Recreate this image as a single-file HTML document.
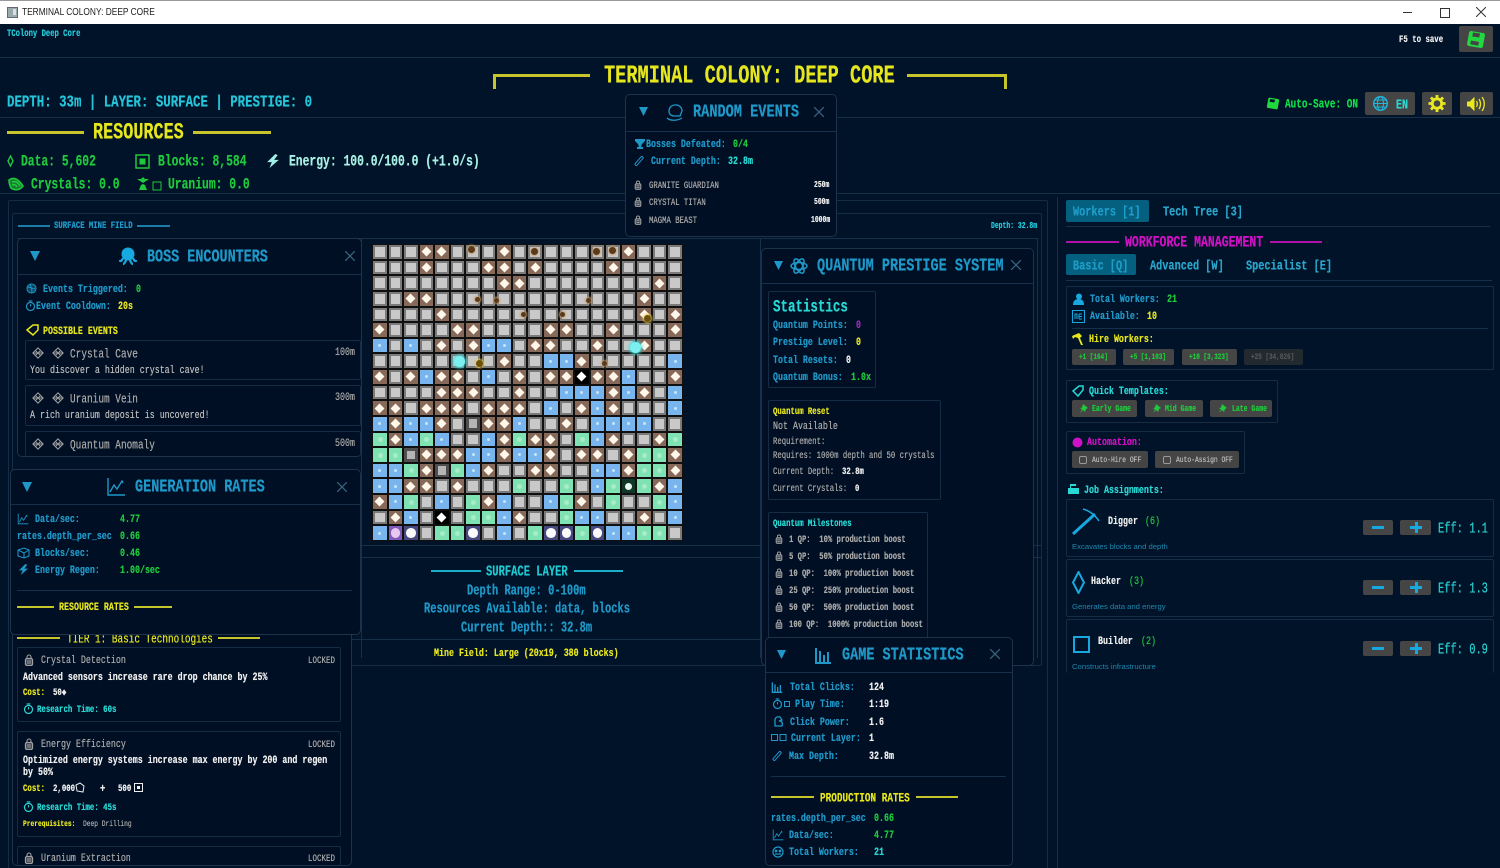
<!DOCTYPE html>
<html><head><meta charset="utf-8"><title>TERMINAL COLONY: DEEP CORE</title>
<style>
html,body{margin:0;padding:0;background:#011329}
#r{position:relative;width:1500px;height:868px;overflow:hidden;background:#011329;filter:blur(.35px)}
#r>*{position:absolute}
p{margin:1px 0 0;line-height:0;white-space:pre;transform:scale(.8,1.1);transform-origin:0 0;font:bold 10.4px/0 "Liberation Mono","DejaVu Sans Mono",monospace;color:#1f98c8;text-shadow:0 0 .4px currentColor}
.n{font-weight:normal}
.y{color:#e6e61e}.t{color:#28d8d4}.g{color:#1fc83c}.w{color:#eee}.a{color:#a8a8a8}.m{color:#d010c4}.c{color:#1f98c8}
.l{background:#17304a;height:1px}.v{background:#17304a;width:1px}
.bx{border:1px solid #142d44;box-sizing:border-box;border-radius:2px}
.yl{background:#c6c62c;height:2px}
.pop{background:#010f24;border:1px solid #1c3349;border-radius:5px;box-sizing:border-box}
.btn{background:#454545;border-radius:2px}
svg.i{fill:none;stroke:currentColor;overflow:visible}
svg.i.c{color:#1f98c8}svg.i.a{color:#a0a0a0}svg.i.t{color:#28d8d4}svg.i.g{color:#1fc83c}svg.i.y{color:#e6e61e}
#grid{left:372px;top:244px;width:311px;height:297px;display:grid;grid-template-columns:repeat(20,15.55px);grid-auto-rows:15.63px;background:#101010}
#grid i{position:relative;display:block}
#grid i::before,#grid i::after{content:"";position:absolute}
#grid i::before{inset:1px}
.G::before{background:#7a7a7a}.G::after{inset:3px;background:#c9c9c9}
.H::before{background:#4e4e4e}.H::after{inset:3.5px;background:#b5b5b5}
.D::before{background:#87695a}.D::after{left:4.3px;top:4.3px;width:7px;height:7px;background:#fff7ea;transform:rotate(45deg)}
.B::before{background:#78b4ee}.B::after{left:6.3px;top:6.3px;width:3px;height:3px;border-radius:50%;background:#c4e6fb}
.U::before{background:#7fe2b2}.U::after{left:5.5px;top:5.5px;width:5px;height:5px;border-radius:50%;background:#a8ecc8}
.K::before{background:#000}.K::after{left:4.3px;top:4.3px;width:7px;height:7px;background:#fff;transform:rotate(45deg)}
.Q::before{background:#464a80}.Q::after{left:3px;top:3px;width:9.6px;height:9.6px;border-radius:50%;background:#fafafa}
.P::before{background:#7f5ab8}.P::after{left:3px;top:3px;width:9.6px;height:9.6px;border-radius:50%;background:#e8c8f0}
.X::before{background:#103828}.X::after{left:4.5px;top:4.5px;width:7px;height:7px;border-radius:50%;background:#e8f8f0}
.o{width:7px;height:7px;border-radius:50%;background:#5a3a1c;box-shadow:0 0 2px 1px #c8a070}
.oy{width:7px;height:7px;border-radius:50%;background:#6a5010;box-shadow:0 0 2px 1px #e8c840}
.hx{width:11px;height:11px;border-radius:50%;background:#7cf0f0;box-shadow:0 0 3px 1px #40e0e0}
</style></head><body><div id="r">
<svg width="0" height="0" style="left:0;top:0"><defs>
<symbol id="lock" viewBox="0 0 10 12"><rect x="1.5" y="4.5" width="7" height="7" rx="1.5" fill="currentColor" fill-opacity=".35" stroke-width="1.3"/><path d="M3 4.5V3a2 2 0 0 1 4 0v1.5M3 7h4M3 9h4" stroke-width="1.1"/></symbol>
<symbol id="gem" viewBox="0 0 14 14"><path d="M7 1 13 7 7 13 1 7ZM4 4l6 6M10 4 4 10M1 7h12" stroke-width="1.2"/></symbol>
<symbol id="clock" viewBox="0 0 12 12"><circle cx="6" cy="7" r="4.4" stroke-width="1.3"/><path d="M4 1h4M6 7V4.5" stroke-width="1.2"/></symbol>
<symbol id="chart" viewBox="0 0 20 20"><path d="M2 1v17h17M4 15l4-7 3 4 5-8 1 2" stroke-width="1.4"/></symbol>
<symbol id="ruler" viewBox="0 0 12 14"><path d="M1 10 8 2c1-1 3 1 2 2L3 12c-1 1-3-1-2-2Z" stroke-width="1.2"/></symbol>
<symbol id="bars" viewBox="0 0 18 18"><path d="M2 17V2M6 17V5M10 17V9M14 17V6M1 17h16" stroke-width="2"/></symbol>
<symbol id="bolt" viewBox="0 0 12 12"><path d="M8 0 1 7h4L3 12l8-7H7L10 1Z" fill="currentColor" stroke="none"/></symbol>
</defs></svg>

<!-- title bar -->
<div style="left:0;top:0;width:1500px;height:24px;background:#fff;border-top:1px solid #999;box-sizing:border-box"></div>
<svg style="left:7px;top:7px" width="11" height="11"><rect x=".5" y=".5" width="10" height="10" fill="#9aa" stroke="#667"/><rect x="6" y="2" width="3" height="6" fill="#dde"/></svg>
<div style="left:22px;top:6px;font:10.2px/13px 'Liberation Sans',sans-serif;color:#222;white-space:pre;transform:scaleX(.82);transform-origin:0 0">TERMINAL COLONY: DEEP CORE</div>
<div style="left:1403px;top:12px;width:9px;height:1px;background:#333"></div>
<div style="left:1440px;top:8px;width:8px;height:8px;border:1px solid #333"></div>
<svg style="left:1476px;top:7px" width="10" height="10"><path d="M0 0 10 10M10 0 0 10" stroke="#333"/></svg>

<!-- frame lines -->
<div class="l" style="left:0;top:57px;width:1500px"></div>
<div class="l" style="left:0;top:117px;width:1500px"></div>
<div class="l" style="left:0;top:193px;width:1500px"></div>
<div class="bx" style="left:8px;top:200px;width:1040px;height:670px"></div>
<div class="bx" style="left:12px;top:213px;width:1030px;height:453px"></div>
<div class="l" style="left:17px;top:238px;width:1020px"></div>
<div class="l" style="left:352px;top:545px;width:690px"></div>
<div class="l" style="left:352px;top:557px;width:690px"></div>
<div class="l" style="left:352px;top:639px;width:410px"></div>
<div class="v" style="left:361px;top:238px;height:420px"></div>
<div class="v" style="left:760px;top:238px;height:420px"></div>
<div class="v" style="left:1037px;top:238px;height:420px"></div>
<div class="v" style="left:1057px;top:197px;height:671px"></div>

<!-- header -->
<p style="left:7px;top:33px;font-size:9px;color:#25c8d8">TColony Deep Core</p>
<p class="w" style="left:1399px;top:39px;font-size:9.2px">F5 to save</p>
<div class="btn" style="left:1459px;top:26px;width:34px;height:26px"></div>
<svg style="left:1466px;top:30px" width="20" height="19" viewBox="0 0 20 19"><path d="M5 1 17 3c1 0 2 1 2 2l-2 11c0 1-1 2-2 2L3 16c-1 0-2-1-2-2L3 3c0-1 1-2 2-2Z" fill="#22d840"/><path d="M7 2.500l7 1-.7 4-7-1ZM5 10.500l8 1.400-.7 3.800-8-1.400Z" fill="#444"/></svg>

<div class="yl" style="left:493px;top:74px;width:97px;height:3px"></div>
<div class="yl" style="left:493px;top:74px;width:3px;height:15px"></div>
<div class="yl" style="left:907px;top:74px;width:100px;height:3px"></div>
<div class="yl" style="left:1004px;top:74px;width:3px;height:15px"></div>
<p class="y" style="left:604px;top:75px;font-size:23.300px">TERMINAL COLONY: DEEP CORE</p>

<p style="left:7px;top:101px;font-size:15.500px;color:#25c4d8">DEPTH: 33m | LAYER: SURFACE | PRESTIGE: 0</p>

<svg style="left:1266px;top:97px" width="14" height="13" viewBox="0 0 20 19"><path d="M5 1 17 3c1 0 2 1 2 2l-2 11c0 1-1 2-2 2L3 16c-1 0-2-1-2-2L3 3c0-1 1-2 2-2Z" fill="#22d840"/><path d="M6 3l7 1-1 4-7-1Z" fill="#011329"/></svg>
<p style="left:1285px;top:103px;font-size:11.700px;color:#10dc48">Auto-Save: ON</p>
<div class="btn" style="left:1365px;top:92px;width:50px;height:23px"></div>
<svg style="left:1373px;top:96px" width="15" height="15" viewBox="0 0 15 15" fill="none" stroke="#20b8e0"><circle cx="7.500" cy="7.500" r="6.800" stroke-width="1.400"/><ellipse cx="7.500" cy="7.500" rx="3" ry="6.800"/><path d="M1 7.500h13M2 4h11M2 11h11"/></svg>
<p style="left:1396px;top:104px;font-size:12.500px;color:#28d8d4">EN</p>
<div class="btn" style="left:1422px;top:92px;width:30px;height:23px"></div>
<svg style="left:1428px;top:95px" width="18" height="17" viewBox="0 0 18 18"><circle cx="9" cy="9" r="5" fill="none" stroke="#e8e820" stroke-width="3"/><path d="M9 0v4M9 14v4M0 9h4M14 9h4M2.600 2.600 5 5M13 13l2.400 2.400M15.400 2.600 13 5M5 13l-2.400 2.400" stroke="#e8e820" stroke-width="3"/></svg>
<div class="btn" style="left:1460px;top:92px;width:33px;height:23px"></div>
<svg style="left:1467px;top:97px" width="19" height="14" viewBox="0 0 19 14" fill="none" stroke="#e8e820"><path d="M0 5h3l4-4v12L3 9H0Z" fill="#e8e820"/><path d="M9.500 4c1 2 1 4 0 6M12 2c2 3 2 7 0 10M15 0c3 4 3 10 0 14" stroke-width="1.300"/></svg>

<!-- resources -->
<div class="yl" style="left:7px;top:131px;width:77px;height:3px"></div>
<div class="yl" style="left:193px;top:131px;width:78px;height:3px"></div>
<p class="y" style="left:93px;top:133px;font-size:21px">RESOURCES</p>
<svg style="left:7px;top:155px" width="7" height="12"><path d="M3.500 1 6 6 3.500 11 1 6Z" fill="none" stroke="#1fc83c" stroke-width="1.400"/></svg>
<p class="g" style="left:21px;top:161px;font-size:14.200px">Data: 5,602</p>
<svg style="left:135px;top:154px" width="15" height="15"><rect x="1" y="1" width="13" height="13" fill="none" stroke="#1fc83c" stroke-width="1.500"/><rect x="4.500" y="4.500" width="6" height="6" fill="#1fc83c"/></svg>
<p class="g" style="left:158px;top:161px;font-size:14.200px">Blocks: 8,584</p>
<svg class="i" style="left:266px;top:154px;color:#a0f0e8" width="14" height="14" viewBox="0 0 12 12"><use href="#bolt"/></svg>
<p style="left:289px;top:161px;font-size:14.200px;color:#a8f0e4">Energy: 100.0/100.0 (+1.0/s)</p>
<svg style="left:8px;top:177px" width="16" height="14" viewBox="0 0 16 14" fill="none" stroke="#1fc83c" stroke-width="1.600"><path d="M1 3c4-3 9-2 14 6-3 4-8 5-12 2C2 9 1 6 1 3Z" fill="#1a7a30"/><path d="M4 5c3-1 6 0 8 4M4 8c2-1 4 0 5 2"/></svg>
<p class="g" style="left:31px;top:184px;font-size:14.200px">Crystals: 0.0</p>
<svg style="left:136px;top:177px" width="26" height="14" viewBox="0 0 26 14"><path d="M7 6 1 2h4L7 0l2 2h4ZM5 8l2-1 2 1 2 5H3Z" fill="#1fc83c"/><rect x="17" y="5" width="8" height="8" fill="none" stroke="#1fc83c"/></svg>
<p class="g" style="left:168px;top:184px;font-size:14.200px">Uranium: 0.0</p>

<!-- mine header -->
<div class="l" style="left:18px;top:225px;width:32px;height:2px;background:#1c7ea8"></div>
<div class="l" style="left:137px;top:225px;width:33px;height:2px;background:#1c7ea8"></div>
<p style="left:54px;top:225px;font-size:9.100px">SURFACE MINE FIELD</p>
<p style="left:991px;top:226px;font-size:8px;color:#20c8d8">Depth: 32.8m</p>

<!-- grid -->
<div id="grid">
<i class=G></i><i class=G></i><i class=G></i><i class=D></i><i class=D></i><i class=G></i><i class=G></i><i class=G></i><i class=D></i><i class=G></i><i class=G></i><i class=G></i><i class=G></i><i class=G></i><i class=G></i><i class=G></i><i class=D></i><i class=G></i><i class=G></i><i class=G></i>
<i class=G></i><i class=G></i><i class=G></i><i class=D></i><i class=G></i><i class=G></i><i class=G></i><i class=D></i><i class=D></i><i class=G></i><i class=D></i><i class=G></i><i class=G></i><i class=G></i><i class=G></i><i class=D></i><i class=G></i><i class=G></i><i class=G></i><i class=G></i>
<i class=G></i><i class=G></i><i class=G></i><i class=G></i><i class=G></i><i class=G></i><i class=G></i><i class=G></i><i class=D></i><i class=D></i><i class=G></i><i class=G></i><i class=G></i><i class=G></i><i class=G></i><i class=G></i><i class=G></i><i class=G></i><i class=D></i><i class=G></i>
<i class=G></i><i class=G></i><i class=D></i><i class=D></i><i class=G></i><i class=G></i><i class=G></i><i class=G></i><i class=G></i><i class=G></i><i class=G></i><i class=G></i><i class=G></i><i class=G></i><i class=G></i><i class=G></i><i class=G></i><i class=D></i><i class=G></i><i class=G></i>
<i class=G></i><i class=G></i><i class=G></i><i class=G></i><i class=D></i><i class=G></i><i class=G></i><i class=G></i><i class=G></i><i class=G></i><i class=G></i><i class=G></i><i class=G></i><i class=G></i><i class=G></i><i class=G></i><i class=G></i><i class=D></i><i class=G></i><i class=D></i>
<i class=D></i><i class=G></i><i class=G></i><i class=G></i><i class=G></i><i class=D></i><i class=D></i><i class=G></i><i class=G></i><i class=G></i><i class=G></i><i class=D></i><i class=D></i><i class=G></i><i class=G></i><i class=D></i><i class=G></i><i class=G></i><i class=G></i><i class=D></i>
<i class=B></i><i class=G></i><i class=B></i><i class=G></i><i class=D></i><i class=G></i><i class=D></i><i class=B></i><i class=B></i><i class=G></i><i class=D></i><i class=D></i><i class=G></i><i class=G></i><i class=D></i><i class=G></i><i class=G></i><i class=D></i><i class=G></i><i class=G></i>
<i class=G></i><i class=G></i><i class=G></i><i class=G></i><i class=G></i><i class=G></i><i class=G></i><i class=G></i><i class=D></i><i class=G></i><i class=G></i><i class=B></i><i class=B></i><i class=D></i><i class=G></i><i class=G></i><i class=G></i><i class=G></i><i class=G></i><i class=B></i>
<i class=D></i><i class=G></i><i class=D></i><i class=B></i><i class=D></i><i class=D></i><i class=G></i><i class=B></i><i class=G></i><i class=D></i><i class=G></i><i class=D></i><i class=D></i><i class=K></i><i class=D></i><i class=D></i><i class=B></i><i class=G></i><i class=G></i><i class=D></i>
<i class=G></i><i class=G></i><i class=G></i><i class=G></i><i class=D></i><i class=D></i><i class=D></i><i class=G></i><i class=G></i><i class=D></i><i class=G></i><i class=G></i><i class=B></i><i class=B></i><i class=B></i><i class=D></i><i class=B></i><i class=D></i><i class=G></i><i class=B></i>
<i class=D></i><i class=D></i><i class=G></i><i class=D></i><i class=D></i><i class=D></i><i class=G></i><i class=D></i><i class=D></i><i class=D></i><i class=G></i><i class=B></i><i class=G></i><i class=D></i><i class=B></i><i class=D></i><i class=G></i><i class=G></i><i class=G></i><i class=B></i>
<i class=B></i><i class=D></i><i class=B></i><i class=B></i><i class=D></i><i class=G></i><i class=H></i><i class=D></i><i class=D></i><i class=B></i><i class=G></i><i class=G></i><i class=D></i><i class=G></i><i class=B></i><i class=B></i><i class=B></i><i class=B></i><i class=G></i><i class=G></i>
<i class=U></i><i class=D></i><i class=B></i><i class=U></i><i class=B></i><i class=G></i><i class=G></i><i class=B></i><i class=D></i><i class=U></i><i class=D></i><i class=D></i><i class=G></i><i class=U></i><i class=B></i><i class=D></i><i class=G></i><i class=G></i><i class=D></i><i class=U></i>
<i class=U></i><i class=U></i><i class=H></i><i class=D></i><i class=D></i><i class=D></i><i class=B></i><i class=B></i><i class=D></i><i class=B></i><i class=B></i><i class=D></i><i class=G></i><i class=D></i><i class=D></i><i class=G></i><i class=D></i><i class=U></i><i class=U></i><i class=D></i>
<i class=B></i><i class=B></i><i class=U></i><i class=D></i><i class=H></i><i class=U></i><i class=B></i><i class=D></i><i class=G></i><i class=G></i><i class=D></i><i class=D></i><i class=G></i><i class=G></i><i class=B></i><i class=B></i><i class=D></i><i class=U></i><i class=U></i><i class=D></i>
<i class=B></i><i class=B></i><i class=D></i><i class=D></i><i class=G></i><i class=D></i><i class=G></i><i class=G></i><i class=G></i><i class=U></i><i class=G></i><i class=G></i><i class=U></i><i class=G></i><i class=B></i><i class=U></i><i class=X></i><i class=U></i><i class=D></i><i class=B></i>
<i class=D></i><i class=B></i><i class=U></i><i class=G></i><i class=B></i><i class=G></i><i class=U></i><i class=D></i><i class=B></i><i class=G></i><i class=G></i><i class=B></i><i class=U></i><i class=D></i><i class=G></i><i class=U></i><i class=G></i><i class=G></i><i class=U></i><i class=B></i>
<i class=G></i><i class=D></i><i class=B></i><i class=G></i><i class=K></i><i class=G></i><i class=U></i><i class=U></i><i class=B></i><i class=D></i><i class=G></i><i class=G></i><i class=U></i><i class=B></i><i class=B></i><i class=G></i><i class=G></i><i class=D></i><i class=G></i><i class=B></i>
<i class=B></i><i class=P></i><i class=Q></i><i class=G></i><i class=U></i><i class=U></i><i class=Q></i><i class=G></i><i class=B></i><i class=G></i><i class=U></i><i class=Q></i><i class=Q></i><i class=U></i><i class=Q></i><i class=B></i><i class=B></i><i class=U></i><i class=U></i><i class=G></i>
</div>
<div class="o" style="left:468px;top:246px"></div><div class="o" style="left:531px;top:248px"></div><div class="o" style="left:593px;top:248px"></div><div class="o" style="left:609px;top:247px"></div>
<div class="o" style="left:475px;top:297px;width:5px;height:5px"></div><div class="o" style="left:494px;top:298px;width:5px;height:5px"></div><div class="o" style="left:586px;top:298px;width:5px;height:5px"></div><div class="o" style="left:521px;top:312px;width:5px;height:5px"></div><div class="o" style="left:560px;top:312px;width:5px;height:5px"></div><div class="o" style="left:602px;top:361px;width:5px;height:5px"></div>
<div class="oy" style="left:644px;top:315px"></div><div class="oy" style="left:476px;top:360px"></div>
<div class="hx" style="left:454px;top:356px"></div><div class="hx" style="left:630px;top:342px"></div>

<!-- surface layer -->
<div style="left:431px;top:570px;width:50px;height:2px;background:#18b0c8"></div>
<div style="left:574px;top:570px;width:49px;height:2px;background:#18b0c8"></div>
<p style="left:486px;top:571px;font-size:13.100px;color:#20c8d0">SURFACE LAYER</p>
<p style="left:467px;top:590px;font-size:13px">Depth Range: 0-100m</p>
<p style="left:424px;top:608px;font-size:13px">Resources Available: data, blocks</p>
<p style="left:461px;top:627px;font-size:13px">Current Depth:: 32.8m</p>
<p class="y" style="left:434px;top:653px">Mine Field: Large (20x19, 380 blocks)</p>

<!-- tech panel -->
<div class="pop" style="left:12px;top:625px;width:340px;height:241px"></div>
<div class="yl" style="left:17px;top:637px;width:43px"></div>
<div class="yl" style="left:218px;top:637px;width:42px"></div>
<p class="y n" style="left:67px;top:638px;font-size:11.700px">TIER 1: Basic Technologies</p>
<div class="bx" style="left:17px;top:647px;width:324px;height:75px"></div>
<svg class="i a" style="left:24px;top:654px" width="10" height="12"><use href="#lock"/></svg>
<p class="a n" style="left:41px;top:660px">Crystal Detection</p>
<p class="a n" style="left:308px;top:660px;font-size:9.400px">LOCKED</p>
<p class="w" style="left:23px;top:677px">Advanced sensors increase rare drop chance by 25%</p>
<p class="y" style="left:23px;top:692px;font-size:9.200px">Cost:</p>
<p class="w" style="left:53px;top:692px;font-size:9.200px">50◆</p>
<svg class="i t" style="left:23px;top:703px" width="11" height="11"><use href="#clock"/></svg>
<p class="t" style="left:37px;top:709px;font-size:9.200px">Research Time: 60s</p>
<div class="bx" style="left:17px;top:731px;width:324px;height:106px"></div>
<svg class="i a" style="left:24px;top:738px" width="10" height="12"><use href="#lock"/></svg>
<p class="a n" style="left:41px;top:744px">Energy Efficiency</p>
<p class="a n" style="left:308px;top:744px;font-size:9.400px">LOCKED</p>
<p class="w" style="left:23px;top:760px">Optimized energy systems increase max energy by 200 and regen</p>
<p class="w" style="left:23px;top:772px">by 50%</p>
<p class="y" style="left:23px;top:788px;font-size:9.200px">Cost:</p>
<p class="w" style="left:53px;top:788px;font-size:9.200px">2,000</p>
<svg style="left:75px;top:782px" width="10" height="11" fill="none" stroke="#eee"><path d="M1 3 5 1l4 3-1 6-6-1Z"/></svg>
<p class="w" style="left:100px;top:789px;font-size:11px">+</p>
<p class="w" style="left:118px;top:788px;font-size:9.200px">500</p>
<svg style="left:134px;top:783px" width="9" height="9"><rect x=".5" y=".5" width="8" height="8" fill="none" stroke="#eee"/><rect x="3" y="3" width="3" height="3" fill="#eee"/></svg>
<svg class="i t" style="left:23px;top:801px" width="11" height="11"><use href="#clock"/></svg>
<p class="t" style="left:37px;top:807px;font-size:9.200px">Research Time: 45s</p>
<p class="y" style="left:23px;top:824px;font-size:7.800px">Prerequisites:</p>
<p class="a n" style="left:83px;top:824px;font-size:7.800px">Deep Drilling</p>
<div class="bx" style="left:17px;top:846px;width:324px;height:20px;border-bottom:0"></div>
<svg class="i a" style="left:24px;top:852px" width="10" height="12"><use href="#lock"/></svg>
<p class="a n" style="left:41px;top:858px">Uranium Extraction</p>
<p class="a n" style="left:308px;top:858px;font-size:9.400px">LOCKED</p>

<!-- boss popup -->
<div class="pop" style="left:17px;top:238px;width:345px;height:219px"></div>
<div class="l" style="left:18px;top:274px;width:343px"></div>
<svg style="left:30px;top:251px" width="10" height="10"><path d="M0 0h10L5 10Z" fill="#1f98c8"/></svg>
<svg style="left:119px;top:247px" width="18" height="19" viewBox="0 0 18 19"><ellipse cx="9" cy="7" rx="6.500" ry="6.500" fill="#18a8e0"/><path d="M4 11C3 14 1 15 .5 13M7 12c0 3-2 5-3 5M11 12c0 3 2 5 3 5M14 11c1 3 3 4 3.500 2" stroke="#18a8e0" stroke-width="2.200" fill="none"/></svg>
<p style="left:147px;top:257px;font-size:16.800px">BOSS ENCOUNTERS</p>
<svg style="left:345px;top:251px" width="10" height="10"><path d="M0 0 10 10M10 0 0 10" stroke="#39677f" stroke-width="1.200"/></svg>
<svg class="i c" style="left:26px;top:283px" width="11" height="11" viewBox="0 0 12 12"><circle cx="6" cy="6" r="5" fill="#1f98c8" fill-opacity=".4"/><path d="M2 5c3-2 5 3 8 1M5 1c-1 3 3 6 1 10"/></svg>
<p style="left:43px;top:289px">Events Triggered:</p><p class="g" style="left:136px;top:289px">0</p>
<svg class="i c" style="left:25px;top:300px" width="11" height="11"><use href="#clock"/></svg>
<p style="left:36px;top:306px">Event Cooldown:</p><p class="y" style="left:118px;top:306px">20s</p>
<svg style="left:26px;top:324px" width="13" height="12" fill="none" stroke="#e6e61e" stroke-width="1.500"><path d="M1 6 7 1h5v5L7 11Z"/></svg>
<p class="y" style="left:43px;top:331px">POSSIBLE EVENTS</p>
<div class="bx" style="left:25px;top:340px;width:336px;height:40px"></div>
<svg class="i a" style="left:32px;top:347px" width="12" height="12"><use href="#gem"/></svg><svg class="i a" style="left:52px;top:347px" width="12" height="12"><use href="#gem"/></svg>
<p class="a n" style="left:70px;top:353px;font-size:11.800px">Crystal Cave</p>
<p class="a n" style="left:335px;top:352px">100m</p>
<p class="n" style="left:30px;top:370px;color:#bbb">You discover a hidden crystal cave!</p>
<div class="bx" style="left:25px;top:385px;width:336px;height:41px"></div>
<svg class="i a" style="left:32px;top:392px" width="12" height="12"><use href="#gem"/></svg><svg class="i a" style="left:52px;top:392px" width="12" height="12"><use href="#gem"/></svg>
<p class="a n" style="left:70px;top:398px;font-size:11.800px">Uranium Vein</p>
<p class="a n" style="left:335px;top:397px">300m</p>
<p class="n" style="left:30px;top:415px;color:#bbb">A rich uranium deposit is uncovered!</p>
<div class="bx" style="left:25px;top:431px;width:336px;height:25px;border-bottom:0"></div>
<svg class="i a" style="left:32px;top:438px" width="12" height="12"><use href="#gem"/></svg><svg class="i a" style="left:52px;top:438px" width="12" height="12"><use href="#gem"/></svg>
<p class="a n" style="left:70px;top:444px;font-size:11.800px">Quantum Anomaly</p>
<p class="a n" style="left:335px;top:443px">500m</p>

<!-- generation popup -->
<div class="pop" style="left:10px;top:469px;width:351px;height:166px"></div>
<div class="l" style="left:11px;top:504px;width:349px"></div>
<svg style="left:22px;top:482px" width="10" height="10"><path d="M0 0h10L5 10Z" fill="#1f98c8"/></svg>
<svg class="i c" style="left:106px;top:477px" width="20" height="20"><use href="#chart"/></svg>
<p style="left:135px;top:487px;font-size:16.900px">GENERATION RATES</p>
<svg style="left:337px;top:482px" width="10" height="10"><path d="M0 0 10 10M10 0 0 10" stroke="#39677f" stroke-width="1.200"/></svg>
<svg class="i c" style="left:17px;top:513px" width="12" height="12" viewBox="0 0 20 20"><use href="#chart"/></svg>
<p style="left:35px;top:519px">Data/sec:</p><p class="g" style="left:120px;top:519px">4.77</p>
<p style="left:17px;top:536px">rates.depth_per_sec</p><p class="g" style="left:120px;top:536px">0.66</p>
<svg style="left:17px;top:547px" width="13" height="12" fill="none" stroke="#1f98c8"><path d="M1 3 7 1l5 2v6l-5 2-6-2ZM1 3l6 3 5-3M7 6v5"/></svg>
<p style="left:35px;top:553px">Blocks/sec:</p><p class="g" style="left:120px;top:553px">0.46</p>
<svg class="i c" style="left:18px;top:564px" width="11" height="11"><use href="#bolt"/></svg>
<p style="left:35px;top:570px">Energy Regen:</p><p class="g" style="left:120px;top:570px">1.00/sec</p>
<div class="l" style="left:17px;top:590px;width:335px"></div>
<div class="yl" style="left:17px;top:606px;width:37px"></div>
<div class="yl" style="left:134px;top:606px;width:38px"></div>
<p class="y" style="left:59px;top:607px">RESOURCE RATES</p>

<!-- quantum popup -->
<div class="pop" style="left:761px;top:248px;width:273px;height:418px"></div>
<div class="l" style="left:762px;top:283px;width:271px"></div>
<svg style="left:774px;top:261px" width="9" height="9"><path d="M0 0h9L4.500 9Z" fill="#1f98c8"/></svg>
<svg style="left:790px;top:257px" width="18" height="18" viewBox="0 0 18 18" fill="none" stroke="#1f98c8" stroke-width="1.500"><ellipse cx="9" cy="9" rx="8" ry="3.500"/><ellipse cx="9" cy="9" rx="8" ry="3.500" transform="rotate(60 9 9)"/><ellipse cx="9" cy="9" rx="8" ry="3.500" transform="rotate(120 9 9)"/></svg>
<p style="left:817px;top:266px;font-size:16.900px">QUANTUM PRESTIGE SYSTEM</p>
<svg style="left:1011px;top:260px" width="10" height="10"><path d="M0 0 10 10M10 0 0 10" stroke="#39677f" stroke-width="1.200"/></svg>
<div class="bx" style="left:768px;top:291px;width:108px;height:97px"></div>
<p class="t" style="left:773px;top:306px;font-size:15.600px">Statistics</p>
<p style="left:773px;top:325px">Quantum Points:</p><p style="left:856px;top:325px;color:#9030b8">0</p>
<p style="left:773px;top:342px">Prestige Level:</p><p class="y" style="left:856px;top:342px">0</p>
<p style="left:773px;top:360px">Total Resets:</p><p class="w" style="left:846px;top:360px">0</p>
<p style="left:773px;top:377px">Quantum Bonus:</p><p class="g" style="left:851px;top:377px">1.0x</p>
<div class="bx" style="left:768px;top:400px;width:173px;height:100px"></div>
<p class="y" style="left:773px;top:411px;font-size:9.100px">Quantum Reset</p>
<p class="a n" style="left:773px;top:426px">Not Available</p>
<p class="a n" style="left:773px;top:441px;font-size:9.100px">Requirement:</p>
<p class="a n" style="left:773px;top:455px;font-size:9.100px">Requires: 1000m depth and 50 crystals</p>
<p class="a n" style="left:773px;top:471px;font-size:9.100px">Current Depth:</p><p class="w" style="left:842px;top:471px;font-size:9.100px">32.8m</p>
<p class="a n" style="left:773px;top:488px;font-size:9.100px">Current Crystals:</p><p class="w" style="left:855px;top:488px;font-size:9.100px">0</p>
<div class="bx" style="left:768px;top:512px;width:160px;height:130px"></div>
<p class="t" style="left:773px;top:523px;font-size:9.100px">Quantum Milestones</p>
<svg class="i a" style="left:775px;top:534px" width="8" height="10"><use href="#lock"/></svg><p class="a" style="left:789px;top:539px;font-size:9px">1 QP:  10% production boost</p>
<svg class="i a" style="left:775px;top:551px" width="8" height="10"><use href="#lock"/></svg><p class="a" style="left:789px;top:556px;font-size:9px">5 QP:  50% production boost</p>
<svg class="i a" style="left:775px;top:568px" width="8" height="10"><use href="#lock"/></svg><p class="a" style="left:789px;top:573px;font-size:9px">10 QP:  100% production boost</p>
<svg class="i a" style="left:775px;top:585px" width="8" height="10"><use href="#lock"/></svg><p class="a" style="left:789px;top:590px;font-size:9px">25 QP:  250% production boost</p>
<svg class="i a" style="left:775px;top:602px" width="8" height="10"><use href="#lock"/></svg><p class="a" style="left:789px;top:607px;font-size:9px">50 QP:  500% production boost</p>
<svg class="i a" style="left:775px;top:619px" width="8" height="10"><use href="#lock"/></svg><p class="a" style="left:789px;top:624px;font-size:9px">100 QP:  1000% production boost</p>

<!-- random events popup -->
<div class="pop" style="left:625px;top:94px;width:212px;height:143px"></div>
<div class="l" style="left:626px;top:131px;width:210px"></div>
<svg style="left:639px;top:107px" width="9" height="9"><path d="M0 0h9L4.500 9Z" fill="#1f98c8"/></svg>
<svg style="left:666px;top:103px" width="18" height="18" viewBox="0 0 18 18" fill="none" stroke="#1f98c8" stroke-width="1.300"><path d="M9 2a6 6 0 0 0-6 6c0 3 2 5 5 5h6l2-5a6 6 0 0 0-7-6ZM1 15c3 3 10 3 15 0"/></svg>
<p style="left:693px;top:112px;font-size:17px">RANDOM EVENTS</p>
<svg style="left:814px;top:107px" width="10" height="10"><path d="M0 0 10 10M10 0 0 10" stroke="#39677f" stroke-width="1.200"/></svg>
<svg style="left:634px;top:138px" width="12" height="12" fill="#1f98c8"><path d="M1 1h10v2L8 6 7 9h2v2H3V9h2L4 6 1 3Z"/></svg>
<p style="left:646px;top:144px">Bosses Defeated:</p><p class="g" style="left:733px;top:144px">0/4</p>
<svg class="i c" style="left:634px;top:155px" width="11" height="12"><use href="#ruler"/></svg>
<p style="left:651px;top:161px">Current Depth:</p><p class="t" style="left:728px;top:161px">32.8m</p>
<svg class="i a" style="left:634px;top:180px" width="8" height="10"><use href="#lock"/></svg><p class="a n" style="left:649px;top:185px;font-size:9.100px">GRANITE GUARDIAN</p><p class="w" style="left:814px;top:185px;font-size:8px">250m</p>
<svg class="i a" style="left:634px;top:197px" width="8" height="10"><use href="#lock"/></svg><p class="a n" style="left:649px;top:202px;font-size:9.100px">CRYSTAL TITAN</p><p class="w" style="left:814px;top:202px;font-size:8px">500m</p>
<svg class="i a" style="left:634px;top:215px" width="8" height="10"><use href="#lock"/></svg><p class="a n" style="left:649px;top:220px;font-size:9.100px">MAGMA BEAST</p><p class="w" style="left:811px;top:220px;font-size:8px">1000m</p>

<!-- game stats popup -->
<div class="pop" style="left:765px;top:637px;width:248px;height:229px"></div>
<div class="l" style="left:766px;top:672px;width:246px"></div>
<svg style="left:777px;top:650px" width="9" height="9"><path d="M0 0h9L4.500 9Z" fill="#1f98c8"/></svg>
<svg class="i c" style="left:814px;top:646px" width="18" height="18"><use href="#bars"/></svg>
<p style="left:842px;top:655px;font-size:16.900px">GAME STATISTICS</p>
<svg style="left:990px;top:649px" width="10" height="10"><path d="M0 0 10 10M10 0 0 10" stroke="#39677f" stroke-width="1.200"/></svg>
<svg class="i c" style="left:771px;top:681px" width="12" height="12" viewBox="0 0 18 18"><use href="#bars"/></svg><p style="left:790px;top:687px">Total Clicks:</p><p class="w" style="left:869px;top:687px">124</p>
<svg class="i c" style="left:772px;top:698px" width="11" height="11"><use href="#clock"/></svg><svg style="left:784px;top:701px" width="6" height="6"><rect x=".5" y=".5" width="5" height="5" fill="none" stroke="#1f98c8"/></svg><p style="left:795px;top:704px">Play Time:</p><p class="w" style="left:869px;top:704px">1:19</p>
<svg style="left:772px;top:715px" width="12" height="12" fill="none" stroke="#1f98c8" stroke-width="1.300"><path d="M3 11V5c0-2 2-4 5-3l2 3-3 1c3 0 4 2 3 5Z"/></svg><p style="left:790px;top:722px">Click Power:</p><p class="w" style="left:869px;top:722px">1.6</p>
<svg style="left:771px;top:734px" width="16" height="8"><rect x=".5" y=".5" width="6" height="6" fill="none" stroke="#1f98c8"/><rect x="9" y=".5" width="6" height="6" fill="none" stroke="#1f98c8"/></svg><p style="left:791px;top:738px">Current Layer:</p><p class="w" style="left:869px;top:738px">1</p>
<svg class="i c" style="left:772px;top:750px" width="11" height="12"><use href="#ruler"/></svg><p style="left:789px;top:756px">Max Depth:</p><p class="w" style="left:869px;top:756px">32.8m</p>
<div class="l" style="left:771px;top:776px;width:235px"></div>
<div class="yl" style="left:771px;top:796px;width:43px"></div>
<div class="yl" style="left:916px;top:796px;width:42px"></div>
<p class="y" style="left:820px;top:797px;font-size:11.700px">PRODUCTION RATES</p>
<p style="left:771px;top:818px">rates.depth_per_sec</p><p class="g" style="left:874px;top:818px">0.66</p>
<svg class="i c" style="left:772px;top:829px" width="12" height="12" viewBox="0 0 20 20"><use href="#chart"/></svg><p style="left:789px;top:835px">Data/sec:</p><p class="g" style="left:874px;top:835px">4.77</p>
<svg style="left:772px;top:846px" width="12" height="12" fill="none" stroke="#1f98c8" stroke-width="1.200"><circle cx="6" cy="6" r="5"/><circle cx="4" cy="5" r=".8" fill="#1f98c8"/><circle cx="8" cy="5" r=".8" fill="#1f98c8"/><path d="M3 8h6"/></svg><p style="left:789px;top:852px">Total Workers:</p><p class="t" style="left:874px;top:852px">21</p>

<!-- right column -->
<div style="left:1066px;top:200px;width:83px;height:22px;background:#05607f;border-radius:2px"></div>
<p style="left:1073px;top:211px;font-size:12.800px;color:#1e9cc8">Workers [1]</p>
<p style="left:1163px;top:211px;font-size:12.800px;color:#2aa6cc">Tech Tree [3]</p>
<div class="l" style="left:1066px;top:226px;width:424px"></div>
<div style="left:1066px;top:241px;width:53px;height:2px;background:#b010a8"></div>
<div style="left:1270px;top:241px;width:52px;height:2px;background:#b010a8"></div>
<p class="m" style="left:1125px;top:242px;font-size:14.400px">WORKFORCE MANAGEMENT</p>
<div style="left:1066px;top:254px;width:70px;height:21px;background:#05607f;border-radius:2px"></div>
<p style="left:1073px;top:265px;font-size:12.800px;color:#1e9cc8">Basic [Q]</p>
<p style="left:1150px;top:265px;font-size:12.800px;color:#2aa6cc">Advanced [W]</p>
<p style="left:1246px;top:265px;font-size:12.800px;color:#2aa6cc">Specialist [E]</p>
<div class="l" style="left:1066px;top:280px;width:426px"></div>

<div class="bx" style="left:1066px;top:286px;width:428px;height:84px"></div>
<svg style="left:1072px;top:293px" width="13" height="12" fill="#18a8e0"><circle cx="7" cy="3.500" r="3"/><path d="M1 12c0-5 3-6 6-6s5 2 5 6Z"/></svg>
<p style="left:1090px;top:299px">Total Workers:</p><p class="g" style="left:1167px;top:299px">21</p>
<svg style="left:1072px;top:310px" width="13" height="13" fill="none" stroke="#18a8e0"><rect x=".5" y=".5" width="12" height="12"/><path d="M3 9V4h2v5M7 4v5M7 4h3M7 6.500h3M7 9h3"/></svg>
<p style="left:1090px;top:316px">Available:</p><p class="y" style="left:1147px;top:316px">10</p>
<div class="l" style="left:1072px;top:328px;width:416px"></div>
<svg style="left:1072px;top:333px" width="12" height="12" fill="#e6e61e"><path d="M0 3 7 0l3 3-2 2 3 7H9L6 5 3 4 1 6Z"/></svg>
<p class="y" style="left:1089px;top:339px">Hire Workers:</p>
<div class="btn" style="left:1072px;top:349px;width:44px;height:16px"></div><p class="g" style="left:1079px;top:357px;font-size:7.500px">+1 [164]</p>
<div class="btn" style="left:1123px;top:349px;width:51px;height:16px"></div><p class="g" style="left:1130px;top:357px;font-size:7.500px">+5 [1,103]</p>
<div class="btn" style="left:1182px;top:349px;width:55px;height:16px"></div><p class="g" style="left:1189px;top:357px;font-size:7.500px">+10 [3,323]</p>
<div class="btn" style="left:1244px;top:349px;width:59px;height:16px;background:#22292f"></div><p style="left:1251px;top:357px;font-size:7.500px;color:#555">+25 [34,826]</p>

<div class="bx" style="left:1066px;top:380px;width:212px;height:43px"></div>
<svg style="left:1072px;top:385px" width="12" height="12" fill="none" stroke="#28d8d4" stroke-width="1.500"><path d="M1 6 7 1h4v4L6 11Z"/></svg>
<p class="t" style="left:1089px;top:391px">Quick Templates:</p>
<div class="btn" style="left:1072px;top:400px;width:65px;height:17px"></div>
<div class="btn" style="left:1145px;top:400px;width:58px;height:17px"></div>
<div class="btn" style="left:1210px;top:400px;width:62px;height:17px"></div>
<svg style="left:1079px;top:404px" width="9" height="9" fill="#1fc83c"><path d="M4 0l5 4-2 1-1 3-2-2-3 3 2-3.500L1 4l2-.5Z"/></svg><p class="g" style="left:1092px;top:409px;font-size:8.100px">Early Game</p>
<svg style="left:1152px;top:404px" width="9" height="9" fill="#1fc83c"><path d="M4 0l5 4-2 1-1 3-2-2-3 3 2-3.500L1 4l2-.5Z"/></svg><p class="g" style="left:1165px;top:409px;font-size:8.100px">Mid Game</p>
<svg style="left:1218px;top:404px" width="9" height="9" fill="#1fc83c"><path d="M4 0l5 4-2 1-1 3-2-2-3 3 2-3.500L1 4l2-.5Z"/></svg><p class="g" style="left:1232px;top:409px;font-size:8.100px">Late Game</p>

<div class="bx" style="left:1066px;top:431px;width:179px;height:43px"></div>
<svg style="left:1072px;top:437px" width="11" height="11"><circle cx="5.500" cy="5.500" r="5" fill="#d010c4"/></svg>
<p class="m" style="left:1087px;top:442px">Automation:</p>
<div class="btn" style="left:1072px;top:451px;width:76px;height:17px"></div>
<div class="btn" style="left:1155px;top:451px;width:84px;height:17px"></div>
<div class="bx" style="left:1079px;top:456px;width:8px;height:8px;border-color:#999"></div>
<div class="bx" style="left:1163px;top:456px;width:8px;height:8px;border-color:#999"></div>
<p class="n" style="left:1092px;top:460px;font-size:7.900px;color:#bbb">Auto-Hire OFF</p>
<p class="n" style="left:1176px;top:460px;font-size:7.900px;color:#bbb">Auto-Assign OFF</p>

<svg style="left:1068px;top:483px" width="11" height="12" fill="#28d8d4"><path d="M0 5h2V1h6v2H3v2h8v6H0Z"/></svg>
<p class="t" style="left:1084px;top:490px">Job Assignments:</p>

<div class="bx" style="left:1066px;top:499px;width:428px;height:58px"></div>
<svg style="left:1072px;top:508px" width="28" height="27" fill="none" stroke="#18a8e0" stroke-width="3"><path d="M1 26 23 6"/><path d="M11 1c7 2 12 6 16 12" stroke-width="1.500"/></svg>
<p class="w" style="left:1108px;top:521px">Digger</p><p class="g n" style="left:1145px;top:521px">(6)</p>
<div style="left:1072px;top:542px;font:7.700px/10px 'Liberation Sans',sans-serif;color:#1f86ac;white-space:pre">Excavates blocks and depth</div>
<div class="btn" style="left:1363px;top:520px;width:30px;height:15px"></div><div style="left:1372px;top:526px;width:12px;height:3px;background:#18a8e0"></div>
<div class="btn" style="left:1400px;top:520px;width:31px;height:15px"></div><div style="left:1410px;top:526px;width:12px;height:3px;background:#18a8e0"></div><div style="left:1414.500px;top:522px;width:3px;height:11px;background:#18a8e0"></div>
<p class="n" style="left:1438px;top:528px;font-size:13px;color:#28d0d0">Eff: 1.1</p>

<div class="bx" style="left:1066px;top:559px;width:428px;height:58px"></div>
<svg style="left:1072px;top:571px" width="13" height="23" fill="none" stroke="#18a8e0" stroke-width="2"><path d="M6.500 1 12 11.500 6.500 22 1 11.500Z"/></svg>
<p class="w" style="left:1091px;top:581px">Hacker</p><p class="g n" style="left:1129px;top:581px">(3)</p>
<div style="left:1072px;top:602px;font:7.700px/10px 'Liberation Sans',sans-serif;color:#1f86ac;white-space:pre">Generates data and energy</div>
<div class="btn" style="left:1363px;top:580px;width:30px;height:15px"></div><div style="left:1372px;top:586px;width:12px;height:3px;background:#18a8e0"></div>
<div class="btn" style="left:1400px;top:580px;width:31px;height:15px"></div><div style="left:1410px;top:586px;width:12px;height:3px;background:#18a8e0"></div><div style="left:1414.500px;top:582px;width:3px;height:11px;background:#18a8e0"></div>
<p class="n" style="left:1438px;top:588px;font-size:13px;color:#28d0d0">Eff: 1.3</p>

<div class="bx" style="left:1066px;top:619px;width:428px;height:54px;border-bottom:0"></div>
<div style="left:1073px;top:636px;width:17px;height:17px;border:2px solid #18a8e0;box-sizing:border-box"></div>
<p class="w" style="left:1098px;top:641px">Builder</p><p class="g n" style="left:1141px;top:641px">(2)</p>
<div style="left:1072px;top:662px;font:7.700px/10px 'Liberation Sans',sans-serif;color:#1f86ac;white-space:pre">Constructs infrastructure</div>
<div class="btn" style="left:1363px;top:641px;width:30px;height:15px"></div><div style="left:1372px;top:647px;width:12px;height:3px;background:#18a8e0"></div>
<div class="btn" style="left:1400px;top:641px;width:31px;height:15px"></div><div style="left:1410px;top:647px;width:12px;height:3px;background:#18a8e0"></div><div style="left:1414.500px;top:643px;width:3px;height:11px;background:#18a8e0"></div>
<p class="n" style="left:1438px;top:649px;font-size:13px;color:#28d0d0">Eff: 0.9</p>
</div></body></html>
